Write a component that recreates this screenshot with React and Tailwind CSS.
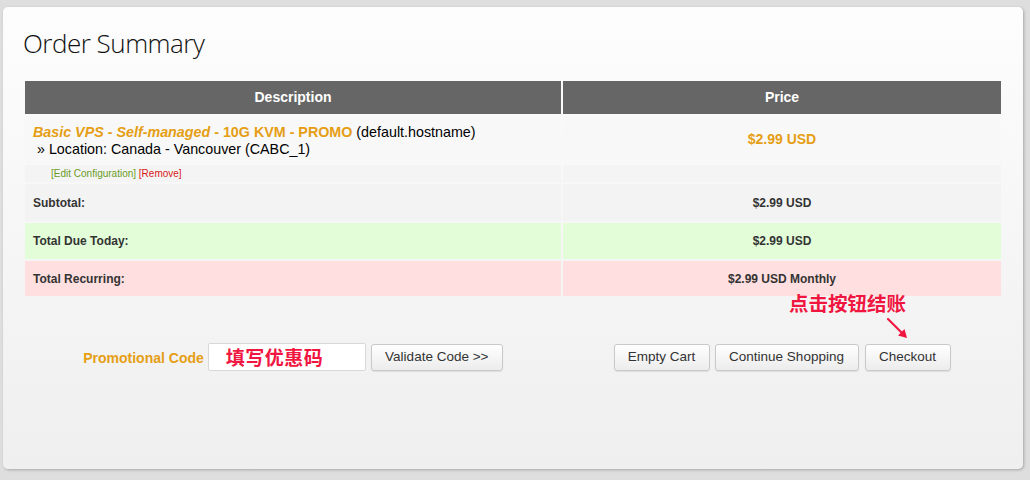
import React from 'react';

const rows = [
  { label: 'Subtotal:', value: '$2.99 USD', bg: 'bg-[#f3f3f3]', h: 'h-[37px]' },
  { label: 'Total Due Today:', value: '$2.99 USD', bg: 'bg-[#e3fdd9]', h: 'h-[36px]' },
  { label: 'Total Recurring:', value: '$2.99 USD Monthly', bg: 'bg-[#ffdfdf]', h: 'h-[35px]' },
];

const Btn = ({ children, className = '' }) => (
  <button
    className={`h-[27px] rounded-[3px] border border-[#c9c9c9] bg-gradient-to-b from-white to-[#ececec] text-[13.5px] text-[#333] shadow-[0_1px_1px_rgba(0,0,0,0.08)] ${className}`}
  >
    {children}
  </button>
);

const App = () => {
  return (
    <div className="w-[1030px] h-[480px] bg-[#dedede] pt-[7px] pl-[3px] font-['Liberation_Sans',Arial,sans-serif]">
      <div className="w-[1020px] h-[462px] rounded-[5px] bg-gradient-to-b from-[#fdfdfd] to-[#efefef] shadow-[1px_1px_3px_rgba(0,0,0,0.25)] pt-[19px] px-[22px]">
        {/* Header */}
        <h1 className="font-['Open_Sans',sans-serif] font-light text-[26px] leading-[34px] text-[#111] tracking-[-0.5px] -ml-[2px]">
          Order Summary
        </h1>

        {/* Table */}
        <div className="mt-[21px] w-[976px] flex flex-col gap-[2px]">
          <div className="flex gap-[2px] h-[33px] text-white font-bold text-[14px]">
            <div className="w-[536px] bg-[#666] flex items-center justify-center">Description</div>
            <div className="flex-1 bg-[#666] flex items-center justify-center">Price</div>
          </div>

          <div className="flex gap-[2px] h-[47px]">
            <div className="w-[536px] bg-[#f8f8f8] pl-[8px] pt-[8px] text-[14.3px] leading-[17px] text-black">
              <div>
                <span className="text-[#e59e14] font-bold">
                  <i>Basic VPS - Self-managed</i> - 10G KVM - PROMO
                </span>{' '}
                (default.hostname)
              </div>
              <div className="pl-[4px]">» Location: Canada - Vancouver (CABC_1)</div>
            </div>
            <div className="flex-1 bg-[#f8f8f8] flex items-center justify-center text-[14px] font-bold text-[#e59e14]">
              $2.99 USD
            </div>
          </div>

          <div className="flex gap-[2px] h-[17px] text-[10px] leading-[17px]">
            <div className="w-[536px] bg-[#f4f4f4] pl-[26px]">
              <span className="text-[#6b9c1f]">[Edit Configuration]</span>{' '}
              <span className="text-[#d81818]">[Remove]</span>
            </div>
            <div className="flex-1 bg-[#f4f4f4]" />
          </div>

          {rows.map((r) => (
            <div key={r.label} className={`flex gap-[2px] ${r.h} text-[12px] font-bold text-[#333]`}>
              <div className={`w-[536px] ${r.bg} pl-[8px] flex items-center`}>{r.label}</div>
              <div className={`flex-1 ${r.bg} flex items-center justify-center`}>{r.value}</div>
            </div>
          ))}
        </div>

        {/* Actions */}
        <div className="mt-[47px] w-[976px] flex gap-[2px]">
          <div className="w-[536px] flex items-center justify-center">
            <span className="text-[14px] font-bold text-[#e59e14] mr-[4px] mt-[3px]">Promotional Code</span>
            <div className="w-[158px] h-[28px] bg-white border border-[#d8d8d8] rounded-[2px] pl-[17px] flex items-center text-[19px] font-bold text-[#f0163f] tracking-[0.5px] font-['Noto_Sans_CJK_SC',sans-serif]">
              填写优惠码
            </div>
            <Btn className="w-[132px] ml-[5px]">Validate Code &gt;&gt;</Btn>
          </div>
          <div className="flex-1 flex items-center justify-center relative">
            <Btn className="w-[96px]">Empty Cart</Btn>
            <Btn className="w-[144px] ml-[5px]">Continue Shopping</Btn>
            <Btn className="w-[86px] ml-[6px]">Checkout</Btn>

            <div className="absolute left-[226px] -top-[52px] text-[19.5px] font-bold text-[#f0163f] font-['Noto_Sans_CJK_SC',sans-serif] leading-[24px]">
              点击按钮结账
            </div>
            <svg className="absolute left-[323px] -top-[26px]" width="24" height="24" viewBox="0 0 24 24">
              <line x1="2" y1="2" x2="19" y2="19" stroke="#f0163f" strokeWidth="2.2" strokeLinecap="round" />
              <path d="M21 21 L12 18.5 L18.5 12 Z" fill="#f0163f" />
            </svg>
          </div>
        </div>
      </div>
    </div>
  );
};

export default App;
